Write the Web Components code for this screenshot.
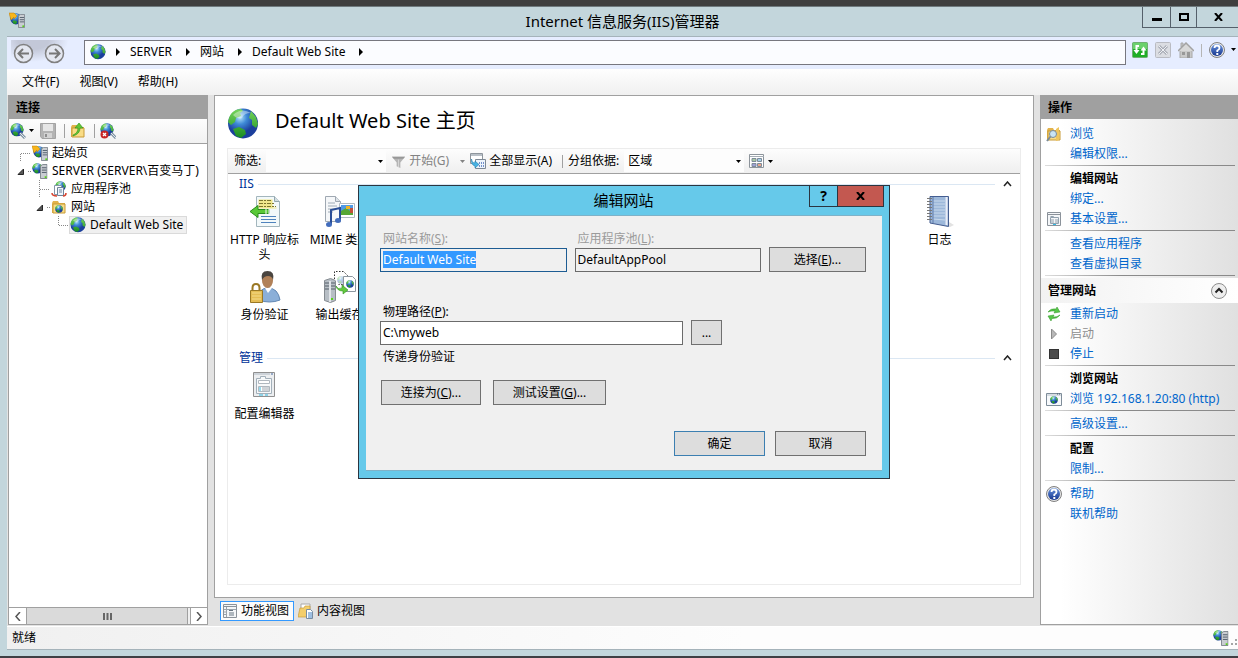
<!DOCTYPE html>
<html lang="zh-CN">
<head>
<meta charset="utf-8">
<title>Internet 信息服务(IIS)管理器</title>
<style>
  html, body { height: 100%; margin: 0; }
  body {
    font: 12px/18px "Noto Sans", "Noto Sans CJK SC", sans-serif;
    color: #000;
    background: #3f3f3f;
    overflow: hidden;
  }
</style>
</head>
<body>

<iis-window>
  <iis-titlebar slot="title">Internet 信息服务(IIS)管理器</iis-titlebar>
  <iis-address slot="bars"></iis-address>
  <iis-menubar slot="bars"></iis-menubar>
  <iis-connections slot="left"></iis-connections>
  <iis-home slot="main"></iis-home>
  <iis-actions slot="right"></iis-actions>
  <iis-statusbar slot="status">就绪</iis-statusbar>
</iis-window>
<iis-edit-site></iis-edit-site>

<template id="window-tpl">
  <style>
    :host { display: flex; flex-direction: column; height: 100vh; box-sizing: border-box; padding: 6px 0 0; }
    .frame { flex: 1; min-height: 0; display: flex; flex-direction: column; background: #c3d6dc; padding: 0 0 6px 7px; border-bottom: 2px solid #3f3f44; border-top: 1px solid #6f7a7e; }
    .client { flex: 1; min-height: 0; display: flex; flex-direction: column; border-top: 1px solid #a5b3ba; border-bottom: 1px solid #a5b3ba; background: #e2e2e2; }
    .work { flex: 1; min-height: 0; display: flex; gap: 6px; padding: 0 0 1px 1px; }
    ::slotted([slot=main]) { flex: 1; min-width: 0; }
  </style>
  <div class="frame">
    <slot name="title"></slot>
    <div class="client">
      <slot name="bars"></slot>
      <div class="work">
        <slot name="left"></slot>
        <slot name="main"></slot>
        <slot name="right"></slot>
      </div>
      <slot name="status"></slot>
    </div>
  </div>
</template>

<template id="titlebar-tpl">
  <style>
    :host { display: grid; grid-template-columns: 1fr auto 1fr; height: 29px; font-size: 15px; line-height: 29px; }
    .app { margin: 5px 0 0 2px; }
    .buttons { justify-self: end; display: flex; height: 20px; border: 1px solid #55606a; border-width: 0 0 1px 1px; }
    button { border: 0; border-right: 1px solid #55606a; background: none; padding: 0; width: 28px; display: grid; place-items: center; }
    button:nth-child(2) { width: 26px; }
    button:last-child { width: 41px; border: 0; padding-left: 3px; }
  </style>
  <iis-icon class="app" name="start"></iis-icon>
  <slot></slot>
  <div class="buttons">
    <button aria-label="最小化"><svg width="10" height="8"><path d="M0 5h10v3H0z"/></svg></button>
    <button aria-label="最大化"><svg width="10" height="8"><path d="M1 1h8v6H1z" fill="none" stroke="#000" stroke-width="2"/></svg></button>
    <button aria-label="关闭"><svg width="10" height="8"><path d="M1 0l7 8M8 0l-7 8" stroke="#000" stroke-width="2"/></svg></button>
  </div>
</template>

<template id="address-tpl">
  <style>
    :host { display: flex; align-items: center; height: 32px; background: #e6edff; }
    .travel { display: flex; width: 77px; height: 32px; background: radial-gradient(ellipse at 38% 0, #c3c8d8 0 30%, #e6edff 70%) no-repeat 4px 3px / 58px 22px; }
    .path { flex: 1; display: flex; align-items: center; gap: 9px; height: 23px; margin-top: -2px; padding: 0 5px; border: 1px solid #77777f; background: #fbfcff; }
    .path a { color: inherit; text-decoration: none; padding-right: 4px; }
    .path svg { width: 6px; }
    .tools { display: flex; align-items: center; gap: 7px; padding: 0 1px 6px 6px; }
    button { border: 0; padding: 0; background: none; display: flex; align-items: center; gap: 5px; }
    i { width: 1px; height: 13px; background: #b5b5b5; }
    .travel button { margin-left: 6px; }
    .travel button + button { margin-left: 10px; }
  </style>
  <div class="travel">
    <button aria-label="后退"><iis-icon name="back" size="21"></iis-icon></button>
    <button aria-label="前进"><iis-icon name="forward" size="21"></iis-icon></button>
  </div>
  <nav class="path">
    <iis-icon name="globe"></iis-icon>
    <svg height="8" viewBox="0 0 6 8"><path d="M1 0l4 4-4 4z"/></svg>
    <a href="#server">SERVER</a>
    <svg height="8" viewBox="0 0 6 8"><path d="M1 0l4 4-4 4z"/></svg>
    <a href="#sites">网站</a>
    <svg height="8" viewBox="0 0 6 8"><path d="M1 0l4 4-4 4z"/></svg>
    <a href="#default">Default Web Site</a>
    <svg height="8" viewBox="0 0 6 8"><path d="M1 0l4 4-4 4z"/></svg>
  </nav>
  <div class="tools">
    <button aria-label="刷新"><iis-icon name="refresh"></iis-icon></button>
    <button aria-label="停止"><iis-icon name="stopload"></iis-icon></button>
    <button aria-label="主页"><iis-icon name="home"></iis-icon></button>
    <i></i>
    <button aria-label="帮助"><iis-icon name="help"></iis-icon><svg width="7" height="4"><path d="M1 0h5l-2.500 3z"/></svg></button>
  </div>
</template>

<template id="menubar-tpl">
  <style>
    :host { display: flex; gap: 20px; height: 26px; padding-left: 15px; background: linear-gradient(#fefefe, #f0f0f0); }
    button { border: 0; padding: 0; background: none; font: inherit; }
  </style>
  <button>文件(F)</button>
  <button>视图(V)</button>
  <button>帮助(H)</button>
</template>

<template id="connections-tpl">
  <style>
    :host { display: flex; flex-direction: column; width: 198px; border: 1px solid #a0a0a0; background: #fff; }
    h2 { margin: 0; padding: 1px 0 0 7px; background: #a0a0a0; font-size: 12px; line-height: 22px; }
    .tools { display: flex; align-items: center; height: 24px; gap: 5px; padding-left: 1px; border-bottom: 1px solid #a0a0a0; background: linear-gradient(#fdfdfd, #f1f1f1); }
    .tools button { border: 0; padding: 0; background: none; display: flex; align-items: center; }
    .tools button:first-child { gap: 2px; }
    .tools i { width: 1px; height: 14px; margin-left: 3px; background: #a0a0a0; }
    .tree { flex: 1; overflow: hidden; }
    .scroll { display: flex; height: 16px; border-top: 1px solid #a0a0a0; background: #f0f0f0; }
    .scroll button { width: 17px; border: 0; padding: 0; background: #fff; display: grid; place-items: center; }
    .thumb { flex: 1; margin-right: 2px; border: 1px solid #a0a0a0; border-width: 0 1px; background: #dadada; display: grid; place-items: center; }
    .scroll button:last-child { border-left: 1px solid #a0a0a0; }
  </style>
  <h2>连接</h2>
  <div class="tools">
    <button aria-label="连接"><iis-icon name="connect"></iis-icon><svg width="7" height="4"><path d="M1 0h5l-2.500 3z"/></svg></button>
    <button aria-label="保存"><iis-icon name="save"></iis-icon></button>
    <i></i>
    <button aria-label="向上"><iis-icon name="up"></iis-icon></button>
    <i></i>
    <button aria-label="断开"><iis-icon name="disconnect"></iis-icon></button>
  </div>
  <div class="tree" role="tree">
    <iis-node level="0" guide="first" icon="start">起始页</iis-node>
    <iis-node level="0" guide="open" icon="server">SERVER (SERVER\百变马丁)</iis-node>
    <iis-node level="1" guide="mid" icon="pool">应用程序池</iis-node>
    <iis-node level="1" guide="open" icon="sites">网站</iis-node>
    <iis-node level="2" guide="last" icon="globe" selected>Default Web Site</iis-node>
  </div>
  <div class="scroll">
    <button aria-label="向左滚动"><svg width="6" height="9"><path d="M5 0L1 4.500 5 9" fill="none" stroke="#555" stroke-width="1.500"/></svg></button>
    <div class="thumb"><svg width="9" height="7"><path d="M1 0v7M4.500 0v7M8 0v7" stroke="#666" stroke-width="2"/></svg></div>
    <button aria-label="向右滚动"><svg width="6" height="9"><path d="M1 0l4 4.500L1 9" fill="none" stroke="#555" stroke-width="1.500"/></svg></button>
  </div>
</template>

<template id="node-tpl">
  <style>
    :host { display: flex; height: 18px; white-space: nowrap; }
    svg { flex: none; width: 14px; height: 18px; }
    .label { display: flex; align-items: center; gap: 4px; line-height: 16px; border: 1px solid transparent; padding-right: 3px; }
    :host([selected]) .label { background: #f0f0f0; border-color: #dadada; }
  </style>
  <svg></svg>
  <div class="label"><iis-icon></iis-icon><slot></slot></div>
</template>

<template id="home-tpl">
  <style>
    :host { display: flex; flex-direction: column; }
    .page { flex: 1; display: flex; flex-direction: column; border: 1px solid #a0a0a0; background: #fff; padding: 0 12px 12px; }
    header { display: flex; align-items: center; gap: 16px; height: 52px; }
    header iis-icon { margin-top: 4px; }
    h1 { margin: 0; font-size: 20px; font-weight: 400; line-height: 44px; padding-bottom: 3px; }
    .list { flex: 1; border: 1px solid #ececec; }
    .tools { display: flex; align-items: center; height: 24px; padding-left: 6px; gap: 5px; border-bottom: 1px solid #a0a0a0; background: linear-gradient(#fdfdfd, #efefef); }
    .tools button { border: 0; padding: 0; background: none; font: inherit; display: flex; align-items: center; gap: 3px; }
    .tools button:disabled { color: #838383; }
    .tools i { width: 1px; height: 13px; margin-left: 5px; background: #a0a0a0; }
    .combo { display: grid; align-items: center; background: #fdfdfd; }
    .combo > * { grid-area: 1 / 1; }
    .combo svg { justify-self: end; margin-right: 3px; pointer-events: none; }
    select { appearance: none; border: 0; background: none; font: inherit; width: 120px; height: 22px; padding: 0 4px; }
    .views { display: flex; gap: 2px; padding: 3px 0 4px 6px; }
    .views button { display: flex; align-items: center; gap: 3px; height: 20px; padding: 0 4px 0 1px; border: 1px solid transparent; background: none; font: inherit; }
    .views .on { border-color: #3399ff; background: #fcfcfc; }
  </style>
  <div class="page">
    <header><iis-icon name="globe" size="32"></iis-icon><h1>Default Web Site 主页</h1></header>
    <div class="list">
      <div class="tools">
        <label for="filter">筛选:</label>
        <span class="combo">
          <select id="filter"><option></option></select>
          <svg width="5" height="3"><path d="M0 0h5l-2.500 3z"/></svg>
        </span>
        <button disabled><iis-icon name="funnel" size="15"></iis-icon>开始(G)</button>
        <svg width="11" height="3"><path d="M6 0h5l-2.500 3z" fill="#838383"/></svg>
        <button><iis-icon name="showall"></iis-icon>全部显示(A)</button>
        <i></i>
        <label for="group">分组依据:</label>
        <span class="combo">
          <select id="group"><option>区域</option></select>
          <svg width="5" height="3"><path d="M0 0h5l-2.500 3z"/></svg>
        </span>
        <button aria-label="视图"><iis-icon name="views"></iis-icon><svg width="5" height="3"><path d="M0 0h5l-2.500 3z"/></svg></button>
      </div>
      <iis-group heading="IIS" rows="2">
        <iis-feature icon="http">HTTP 响应标头</iis-feature>
        <iis-feature icon="mime">MIME 类型</iis-feature>
        <iis-feature icon="log" style="grid-column: 10">日志</iis-feature>
        <iis-feature icon="auth">身份验证</iis-feature>
        <iis-feature icon="cache">输出缓存</iis-feature>
      </iis-group>
      <iis-group heading="管理">
        <iis-feature icon="config">配置编辑器</iis-feature>
      </iis-group>
    </div>
  </div>
  <div class="views">
    <button class="on"><iis-icon name="featureview"></iis-icon>功能视图</button>
    <button><iis-icon name="contentview"></iis-icon>内容视图</button>
  </div>
</template>

<template id="group-tpl">
  <style>
    :host { display: block; }
    .head { display: flex; align-items: center; height: 18px; gap: 4px; padding: 1px 8px 0 11px; color: #003399; }
    .head::after { content: ""; order: 1; flex: 1; height: 1px; background: #dbe7f3; }
    button { order: 2; border: 0; padding: 0; margin-left: 4px; background: none; display: flex; }
    .grid { display: grid; grid-template-columns: repeat(auto-fill, 75px); grid-auto-rows: 75px; padding-bottom: 5px; }
  </style>
  <div class="head"><span></span><button aria-label="折叠"><svg width="9" height="6"><path d="M1 5l3.500-4L8 5" fill="none" stroke="#222" stroke-width="1.500"/></svg></button></div>
  <div class="grid"><slot></slot></div>
</template>

<template id="feature-tpl">
  <style>
    :host { display: flex; flex-direction: column; align-items: center; gap: 4px; padding: 3px 2px 0 0; line-height: 15px; text-align: center; white-space: nowrap; }
    :host([icon=http]) div { white-space: normal; word-break: break-all; }
  </style>
  <iis-icon size="32"></iis-icon>
  <div><slot></slot></div>
</template>

<template id="actions-tpl">
  <style>
    :host { display: flex; flex-direction: column; width: 197px; border: 1px solid #a0a0a0; border-right: 0; background: linear-gradient(90deg, #fff 10%, #e0e0e0); }
    h2 { margin: 0 0 4px; padding: 1px 0 0 7px; background: #a0a0a0; font-size: 12px; line-height: 22px; }
    h3 { margin: 0; padding: 0 11px 0 7px; font-size: 12px; line-height: 25px; display: flex; justify-content: space-between; align-items: center; background: linear-gradient(90deg, #f2f2f2, #fff); }
    hr { width: 190px; height: 1px; margin: 2px 0 2px 4px; border: 0; background: linear-gradient(90deg, #ddd, #8a8a8a 40%); }
    button { border: 0; padding: 0; background: none; display: flex; }
  </style>
  <h2>操作</h2>
  <iis-action icon="browse">浏览</iis-action>
  <iis-action>编辑权限...</iis-action>
  <hr>
  <iis-action kind="title">编辑网站</iis-action>
  <iis-action>绑定...</iis-action>
  <iis-action icon="settings">基本设置...</iis-action>
  <hr>
  <iis-action>查看应用程序</iis-action>
  <iis-action>查看虚拟目录</iis-action>
  <hr>
  <h3>管理网站<button aria-label="折叠"><iis-icon name="collapse"></iis-icon></button></h3>
  <iis-action icon="restart">重新启动</iis-action>
  <iis-action icon="play" kind="off">启动</iis-action>
  <iis-action icon="stop">停止</iis-action>
  <hr>
  <iis-action kind="title">浏览网站</iis-action>
  <iis-action icon="web">浏览 192.168.1.20:80 (http)</iis-action>
  <hr>
  <iis-action>高级设置...</iis-action>
  <hr>
  <iis-action kind="title">配置</iis-action>
  <iis-action>限制...</iis-action>
  <hr>
  <iis-action icon="help">帮助</iis-action>
  <iis-action>联机帮助</iis-action>
</template>

<template id="action-tpl">
  <style>
    :host { display: flex; align-items: center; gap: 8px; box-sizing: border-box; height: 20px; padding: 2px 0 0 5px; white-space: nowrap; }
    a { color: #0066cc; text-decoration: none; }
    span { color: #8d8d8d; }
    :host([kind=title]) { font-weight: bold; }
    :host([kind=title]) span { color: #000; }
  </style>
  <iis-icon></iis-icon>
</template>

<template id="statusbar-tpl">
  <style>
    :host { display: flex; align-items: center; justify-content: space-between; height: 22px; padding-left: 5px; border-top: 1px solid #fff; background: linear-gradient(90deg, #f0f0f0, #fdfdfd 60%); }
    .right { display: flex; align-items: end; gap: 1px; }
  </style>
  <slot></slot>
  <div class="right">
    <iis-icon name="server"></iis-icon>
    <svg width="8" height="12" fill="#a5a5a5"><path d="M1 9h2v2H1zM5 9h2v2H5zM5 5h2v2H5z"/></svg>
  </div>
</template>

<template id="edit-site-tpl">
  <style>
    /* floats over the window like a modal */
    :host { position: absolute; left: 358px; top: 185px; width: 530px; border: 1px solid #2b3540; background: #66c9ea; }
    .bar { display: grid; grid-template-columns: 1fr auto 1fr; padding-right: 5px; font-size: 15px; line-height: 28px; height: 29px; }
    .bar span { grid-column: 2; padding-left: 4px; }
    .caption { justify-self: end; display: flex; height: 20px; border: 1px solid #2b3540; border-top: 0; }
    .caption button { border: 0; padding: 0; width: 27px; height: 20px; font: bold 14px/20px "Noto Sans", sans-serif; background: none; }
    .caption .close { width: 46px; border-left: 1px solid #2b3540; background: #c35850; display: grid; place-items: center; }
    form { display: grid; margin: 0 7px 7px; padding: 13px 16px 14px 14px; border: 1px solid #7fb2c8; border-width: 1px 0; background: #f0f0f0; }
    .row { display: flex; gap: 8px; }
    .field { display: flex; flex-direction: column; flex: 1; }
    label { padding-left: 3px; line-height: 19px; }
    label.off { color: #9b9b9b; }
    input { box-sizing: border-box; width: 100%; height: 24px; border: 1px solid #6b6b6b; padding: 0 2px 2px; font: inherit; background: #fff; outline: 0; }
    input[readonly] { background: #f0f0f0; }
    #name { border-color: #1d5c93; }
    #name::selection { background: #3399ff; color: #fff; }
    form button { box-sizing: border-box; height: 25px; border: 1px solid #707070; background: #dddddd; padding: 0; font: inherit; }
    .row > button { align-self: end; }
    .path { margin-top: 30px; width: 342px; }
    .note { padding: 3px 0 0 3px; }
    .test { margin-top: 14px; padding-left: 1px; gap: 12px; }
    .end { margin-top: 26px; justify-content: end; gap: 10px; }
    .end button { width: 91px; }
    form .ok { border-color: #3c7fb1; }
  </style>
  <div class="bar">
    <span>编辑网站</span>
    <div class="caption"><button>?</button><button class="close" aria-label="关闭"><svg width="9" height="8"><path d="M1 0l7 8M8 0l-7 8" stroke="#000" stroke-width="2"/></svg></button></div>
  </div>
  <form>
    <div class="row">
      <div class="field"><label class="off" for="name">网站名称(<u>S</u>):</label><input id="name" value="Default Web Site" readonly></div>
      <div class="field"><label class="off" for="pool">应用程序池(<u>L</u>):</label><input id="pool" value="DefaultAppPool" readonly></div>
      <button type="button" style="width: 97px">选择(<u>E</u>)...</button>
    </div>
    <div class="row path">
      <div class="field"><label for="path">物理路径(<u>P</u>):</label><input id="path" value="C:\myweb"></div>
      <button type="button" style="width: 31px">...</button>
    </div>
    <div class="note">传递身份验证</div>
    <div class="row test">
      <button type="button" style="width: 100px">连接为(<u>C</u>)...</button>
      <button type="button" style="width: 113px">测试设置(<u>G</u>)...</button>
    </div>
    <div class="row end">
      <button type="button" class="ok">确定</button>
      <button type="button">取消</button>
    </div>
  </form>
</template>

<script>
  const globe = (x, y, s) => `<svg x="${x}" y="${y}" width="${s}" height="${s}" viewBox="0 0 32 32">
    <circle cx="16" cy="15.500" r="15" fill="url(#sea)"/>
    <path d="M2 10C4 4 9 1 14 1l2 2-3 2 1 3-5 2-1 4-4 3-3-3zM6 21l6-2 6 3 1 4-5 4-5-2zM24 3l5 6 2 7-2 4-4-3 0-5-3-2z" fill="url(#land)"/>
    <path d="M6 7Q14-1 24 5q-7 0-9 5-4 2-9-3z" fill="#fff" opacity=".4"/></svg>`;
  const tower = (x, y, s) => `<svg x="${x}" y="${y}" width="${s / 2}" height="${s}" viewBox="0 0 8 16">
    <path d="M.5 2L3 .5h4.500v15h-7z" fill="#c9cdd2" stroke="#7b828b"/><path d="M2 4h5M2 6.500h5M2 9h5" stroke="#4d5967"/><path d="M5 13h2v2H5z" fill="#58d219"/></svg>`;
  const page = '<path d="M1.500 1.500h13v13h-13z" fill="#f4f6f8" stroke="#8b929a"/><path d="M2 3.500h12" stroke="#8b929a"/>';
  const folder = '<path d="M1 4l1-2h5l1 2h6v10H1z" fill="#e3b34c"/><path d="M2 5h12v9H2z" fill="#f9dc85" stroke="#c79a36"/>';
  const ring = '<circle cx="10.500" cy="10.500" r="9" fill="#e4e7f0" stroke="#808080" stroke-width="1.500"/>';

  // [viewBox size, drawing]
  const icons = {
    globe: [32, globe(0, 0, 32)],
    start: [16, globe(1, 1, 12) + tower(9, 2, 14) + '<path d="M0 1h5l3 3-3 3V5L2 8z" fill="#f7b51b" stroke="#bc7a09" stroke-width=".5"/>'],
    server: [16, globe(0, 0, 11) + tower(8, 1, 15)],
    back: [21, ring + '<path d="M16 10.500H6M10 6l-4.500 4.500L10 15" fill="none" stroke="#777" stroke-width="2"/>'],
    forward: [21, ring + '<path d="M5 10.500h10M11 6l4.500 4.500L11 15" fill="none" stroke="#777" stroke-width="2"/>'],
    refresh: [16, '<rect x=".5" y=".5" width="15" height="15" rx="1" fill="#1fae27" stroke="#6faf72"/><path d="M1 1h14v6H1z" fill="#9ce79b" opacity=".6"/><path d="M7 4H4.500v5M9 12h2.500V7" fill="none" stroke="#fff" stroke-width="2"/><path d="M1.500 8h6l-3 4zM8.500 8.500h6l-3-4z" fill="#fff"/>'],
    stopload: [16, '<rect x=".5" y=".5" width="15" height="15" rx="1" fill="#dbdde2" stroke="#b9bbc2"/><path d="M4 4l8 8M12 4l-8 8" stroke="#a9adb6" stroke-width="3"/><path d="M4 4l8 8M12 4l-8 8" stroke="#eef0f4"/>'],
    home: [16, '<path d="M3 1h2v4H3zM2 8h12v8H2z" fill="#c9c9c9" stroke="#a8a8a8"/><path d="M0 9l8-8 8 8" fill="#d8d8d8" stroke="#a2a2a2" stroke-width="1.500"/><path d="M4 10h3v3H4zM9 10h3v6H9z" fill="#989898"/>'],
    help: [16, '<circle cx="8" cy="8" r="7.500" fill="#e8e8e8" stroke="#818181"/><circle cx="8" cy="8" r="6" fill="url(#blue)"/><path d="M5.500 6Q5.500 3.500 8 3.500T10.500 6Q10.500 7.500 8.300 8.500V10" fill="none" stroke="#fff" stroke-width="1.800"/><path d="M7.300 11h2v2h-2z" fill="#fff"/>'],
    connect: [16, globe(0, 0, 14) + '<path d="M10 10l5 5" stroke="#8194a4" stroke-width="3"/><path d="M10 10l5 5" stroke="#dfe6ec"/>'],
    disconnect: [16, globe(0, 0, 14) + '<path d="M11 10l5 5" stroke="#8194a4" stroke-width="3"/><path d="M11 10l5 5" stroke="#dfe6ec"/><circle cx="4.500" cy="11.500" r="4" fill="#c92526"/><path d="M3 10l3 3M6 10l-3 3" stroke="#fff" stroke-width="1.300"/>'],
    save: [16, '<path d="M.5.500h15v15H2l-1.500-2z" fill="#b3b3b3" stroke="#a3a3a3"/><path d="M3 1h10v7H3z" fill="#e6e6e6"/><path d="M4 10h8v5H4z" fill="#d3d3d3"/><path d="M5 11h2v3H5z" fill="#8f8f8f"/>'],
    up: [16, folder + '<path d="M3 12Q8 10 8 5H5l4-5 4 5h-3q0 6-7 8z" fill="#63c637" stroke="#2c901a" stroke-width=".6"/>'],
    pool: [16, globe(4, 0, 11) + '<path d="M3.500 4.500h7v9h-7z" fill="#fff" stroke="#8397aa"/><path d="M6.500 6.500h6v8h-6z" fill="#edf4fb" stroke="#6e8499"/><path d="M8 9h3M8 11h3" stroke="#7089a2"/><path d="M1 12q0 3 5 3M12 15q3 0 3-3" fill="none" stroke="#d8442f" stroke-width="1.500"/>'],
    sites: [16, folder + globe(4, 6, 8)],
    browse: [16, folder + '<path d="M10 3l3-2v13l-3 1z" fill="#efc55d"/><circle cx="7" cy="8" r="3.500" fill="#c9e4f4" stroke="#7b8b98"/><path d="M4.500 10.500L1 15" stroke="#7b8b98" stroke-width="2"/>'],
    settings: [16, page + '<path d="M4.500 6.500h8v6h-8zM4.500 5.500h3v1M5 9h3M9 9h3M5 11h3M9 11h3" fill="none" stroke="#92a1ae"/><path d="M7 13h3v1H7z" fill="#33b9e3"/>'],
    web: [16, '<path d="M.5 2.500h15v12H.5z" fill="#f7f9fb" stroke="#7e8c99"/><path d="M1 4h14" stroke="#b4c0ca"/><path d="M11 3h1M13 3h1" stroke="#44576b"/>' + globe(4, 5, 8)],
    restart: [16, '<path d="M2 6q3-4 8-3l1-2 3 5-6 1 1-2Q5 4.500 2 6zM14 9q-3 4-8 3.500L5 15 2 10l6-1-1 2q4 .5 7-2z" fill="#57c648" stroke="#2f9327" stroke-width=".5"/>'],
    play: [16, '<path d="M5.500 3l5 5-5 5z" fill="#b8b8b8" stroke="#8a8a8a"/>'],
    stop: [16, '<rect x="3.500" y="3.500" width="9" height="9" fill="#4c4c4c" stroke="#333"/>'],
    collapse: [16, '<circle cx="8" cy="8" r="7.500" fill="#eee" stroke="#8d8d8d"/><path d="M4.500 9.500L8 6l3.500 3.500" fill="none" stroke="#222" stroke-width="2"/>'],
    funnel: [16, '<path d="M1 3h14l-5 6v6l-4-2V9z" fill="#b5b5b5"/><path d="M1 3h14l-2 2H3z" fill="#989898"/><path d="M8 6v8" stroke="#d5d5d5"/>'],
    showall: [16, '<path d="M.5.500h12v10H.5z" fill="#fff" stroke="#8e959c"/><path d="M1 2h11" stroke="#b9c0c7" stroke-width="2"/><path d="M5.500 6.500h10v9h-10z" fill="#edf4fb" stroke="#7e8995"/><path d="M9 10h1M11 10h1M13 10h1M9 13h1M11 13h1M13 13h1" stroke="#4b6fba" stroke-width="1.500"/><path d="M1.500 6q0 4 3.500 4V8l4 3.500L5 15v-2Q1 12 1.500 6z" fill="#47b2e3" stroke="#227faf" stroke-width=".6"/>'],
    views: [16, '<path d="M.5 1.500h14v13H.5z" fill="#fff" stroke="#8d949b"/><path d="M1 3.500h14" stroke="#a5adb5"/><path d="M3 5.500h4v3H3z" fill="#a9c99f" stroke="#7d8b99"/><path d="M8.500 5.500h4v3h-4z" fill="#a5cfe8" stroke="#7d8b99"/><path d="M3 10.500h4v3H3z" fill="#9f9fd5" stroke="#7d8b99"/><path d="M8.500 10.500h4v3h-4z" fill="#eaa78c" stroke="#7d8b99"/>'],
    featureview: [16, page + '<path d="M4.500 4v10M2 6.500h12M2 9h2M2 11.500h2" stroke="#9ba4ac"/><path d="M7 7.500h4M7 10h5M7 12h5" stroke="#687683"/>'],
    contentview: [16, '<path d="M3 1h9v6H3z" fill="#fff" stroke="#a9a9a9"/><path d="M0 14L2 5h4l1-2h5v11z" fill="#f3ce6c" stroke="#c79c39" stroke-width=".7"/><path d="M8.500 6.500h4l2 2v7h-6z" fill="#fff" stroke="#778ca2"/><path d="M10 10h4M10 12h4M10 14h4" stroke="#3e80c5"/>'],
    http: [32, '<path d="M7.500.500h18l5 5v25h-23z" fill="#f3f9fa" stroke="#a3b6bd"/><path d="M25.500.500v5h5" fill="#d3dee2" stroke="#93a6ad"/><path d="M9.500 3.500h14v8h4v1h-18z" fill="#f0e78c"/><path d="M10 4.500h13M10 7.500h15M10 10.500h17" stroke="#7b752c" stroke-dasharray="4 1 2 1"/><path d="M1 15.500l8-6v4h11v4H9v4z" fill="#58c837" stroke="#298c1c"/><path d="M17 13v5M20 13v5" stroke="#f3f9fa"/><path d="M12 20.500h15M12 23.500h15M12 26.500h15" stroke="#4f83bd"/>'],
    mime: [32, '<path d="M1.500.500h10l5 5v20h-15z" fill="#f5f7f9" stroke="#9fa8b2"/><path d="M11.500.500v5h5" fill="#dde3e8" stroke="#9fa8b2"/><path d="M4 7h7M4 10h9M4 13h7M4 16h5" stroke="#9eaab6"/><path d="M15.500 7.500h15v14h-15z" fill="#fff" stroke="#b0b8c0"/><path d="M17 9h12v10H17z" fill="#4f99e5"/><path d="M17 15l5-3 7 5v2H17z" fill="#56a735"/><path d="M22 10h4v3h-4z" fill="#f0b325"/><path d="M26 12h3v5h-3z" fill="#c14f38"/><path d="M7 28V14l9-2v12" fill="none" stroke="#294d96" stroke-width="2"/><ellipse cx="5" cy="28.500" rx="3" ry="2.500" fill="#416cbc"/><ellipse cx="14" cy="24.500" rx="3" ry="2.500" fill="#416cbc"/>'],
    auth: [32, '<path d="M9 29q0-12 10-12t12 12q-10 4-22 0z" fill="#8bafd8" stroke="#6287b2"/><path d="M16 17l3 5 4-5z" fill="#fff"/><ellipse cx="18.500" cy="9.500" rx="5.500" ry="7.500" fill="#b18158"/><path d="M13 9Q11 0 18.500 0T24 9q-1-4-5-4t-6 4z" fill="#4a4540"/><path d="M3.500 19v-2q0-4 3.500-4t3.500 4v2" fill="none" stroke="#9a7825" stroke-width="2"/><path d="M1.500 19.500h12v12h-12z" fill="#e5bd55" stroke="#9a7825"/><path d="M3 22h9M3 25h9M3 28h9" stroke="#f5dc8b"/>'],
    cache: [32, '<path d="M.5 9.500l6-2 5 2v20l-5 2-6-2z" fill="#b7bec5" stroke="#858b91"/><path d="M6 10v21" stroke="#e0e4e8" stroke-width="2"/><path d="M1 12h4M1 15h4M1 18h4M7 12h4M7 15h4M7 18h4" stroke="#555f69"/><path d="M7 27h2v2H7z" fill="#58d219"/><path d="M10.500 8V.500h9l4 4v9h-9" fill="#fff" stroke="#333" stroke-dasharray="1.500 1.500"/><g opacity=".35">' + globe(13, 5, 8) + '</g><path d="M19.500 5.500h9l3 3v12h-12z" fill="#fff" stroke="#8c969f"/>' + globe(22, 9, 8) + '<path d="M12 15q2 4 6 2v-3l6 5-5 4v-3q-6 0-7-5z" fill="#63c83f" stroke="#30941f" stroke-width=".6"/>'],
    log: [32, '<path d="M6 27l20 4 4-2-5-3z" fill="#e2e2e2"/><path d="M6 .5h18.500v30L6 27z" fill="#9db8da" stroke="#455e91"/><path d="M9 5h12M9 8h12M9 11h12M9 14h12M9 17h12M9 20h12M9 23l12 1" stroke="#c8d9ec"/><path d="M22.500 1v28" stroke="#e9edf7" stroke-width="2"/><path d="M9 1v26" stroke="#5f7bab"/><path d="M3 2.500h5M3 5.500h5M3 8.500h5M3 11.500h5M3 14.500h5M3 17.500h5M3 20.500h5M3 23.500h5" stroke="#777"/>'],
    config: [32, '<path d="M4.500 2.500h21v24h-21z" fill="#eceef0" stroke="#909090"/><path d="M5 4h16" stroke="#cdd3d9" stroke-width="2"/><path d="M22 4h2" stroke="#4468a0"/><path d="M7.500 8.500h4v-2h5v2h6v15h-15z" fill="#f7f9fa" stroke="#a3b0ba"/><path d="M9.500 10.500h11v3h-11zM9.500 16.500h11v5h-11z" fill="#fff" stroke="#b0b8bf"/><path d="M10 18h2M10 20h2" stroke="#31b6dc"/><path d="M13 18h7M13 20h7" stroke="#9ea7af"/><path d="M10 25h4M16 25h3" stroke="#31b6dc"/>'],
  };
  const defs = `<defs>
    <radialGradient id="sea" cx=".4" cy=".3"><stop offset="0" stop-color="#b4e3fa"/><stop offset=".45" stop-color="#3f8bd8"/><stop offset="1" stop-color="#1b3f9c"/></radialGradient>
    <linearGradient id="land" x2="0" y2="1"><stop stop-color="#77d65b"/><stop offset="1" stop-color="#188b21"/></linearGradient>
    <linearGradient id="blue" x2="0" y2="1"><stop stop-color="#6793df"/><stop offset="1" stop-color="#17368d"/></linearGradient></defs>`;

  class IisIcon extends HTMLElement {
    static get observedAttributes() { return ['name', 'size']; }
    constructor() {
      super();
      this._root = this.attachShadow({ mode: 'open' });
    }
    connectedCallback() { this.render(); }
    attributeChangedCallback() { this.render(); }
    render() {
      const size = this.getAttribute('size') || 16;
      const icon = icons[this.getAttribute('name')];
      this._root.innerHTML = `<style>:host { display: block; flex: none; width: ${size}px; height: ${size}px; } svg { display: block; }</style>` +
        (icon ? `<svg width="${size}" height="${size}" viewBox="0 0 ${icon[0]} ${icon[0]}">${defs}${icon[1]}</svg>` : '');
    }
  }
  customElements.define('iis-icon', IisIcon);

  // base class: clones <template id="NAME-tpl"> into the shadow root
  class IisElement extends HTMLElement {
    constructor() {
      super();
      const id = this.localName.replace('iis-', '') + '-tpl';
      this._root = this.attachShadow({ mode: 'open' });
      this._root.appendChild(document.getElementById(id).content.cloneNode(true));
    }
    $(sel) { return this._root.querySelector(sel); }
  }

  const guides = {
    first: '<path d="M3.500 10v8M4 9.500h10" stroke="#888" stroke-dasharray="1 1"/>',
    mid: '<path d="M3.500 0v18M4 9.500h10" stroke="#888" stroke-dasharray="1 1"/>',
    last: '<path d="M3.500 0v10M4 9.500h10" stroke="#888" stroke-dasharray="1 1"/>',
    open: '<path d="M6.500 7v5.500H1z" fill="#595959" stroke="#262626"/><path d="M11 9.500h3" stroke="#888" stroke-dasharray="1 1"/>',
  };

  customElements.define('iis-node', class extends IisElement {
    connectedCallback() {
      this.setAttribute('role', 'treeitem');
      this.style.paddingLeft = 8 + 19 * this.getAttribute('level') + 'px';
      this.$('svg').innerHTML = guides[this.getAttribute('guide')];
      this.$('iis-icon').setAttribute('name', this.getAttribute('icon'));
    }
  });

  customElements.define('iis-feature', class extends IisElement {
    connectedCallback() {
      this.$('iis-icon').setAttribute('name', this.getAttribute('icon'));
    }
  });

  customElements.define('iis-group', class extends IisElement {
    connectedCallback() {
      this.$('span').textContent = this.getAttribute('heading');
      if (this.hasAttribute('rows')) this.$('.grid').style.gridTemplateRows = `repeat(${this.getAttribute('rows')}, 75px)`;
    }
  });

  customElements.define('iis-action', class extends IisElement {
    connectedCallback() {
      this.$('iis-icon').setAttribute('name', this.getAttribute('icon') || '');
      const box = document.createElement(this.hasAttribute('kind') ? 'span' : 'a');
      if (box.localName == 'a') box.href = '#';
      box.appendChild(document.createElement('slot'));
      this._root.appendChild(box);
    }
  });

  customElements.define('iis-edit-site', class extends IisElement {
    connectedCallback() {
      const name = this.$('#name');
      name.focus({ preventScroll: true });
      name.select();
    }
  });

  ['window', 'titlebar', 'address', 'menubar', 'connections', 'home', 'actions', 'statusbar'].forEach((name) => {
    customElements.define('iis-' + name, class extends IisElement {});
  });
</script>
</body>
</html>
